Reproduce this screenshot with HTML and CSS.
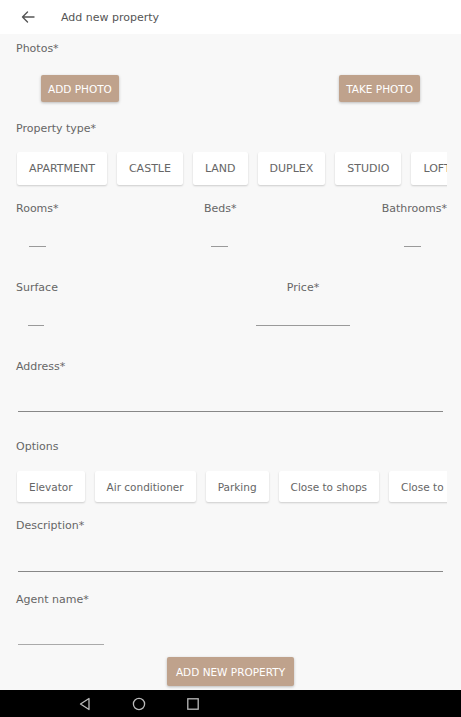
FILE: index.html
```html
<!DOCTYPE html>
<html lang="en">
<head>
<meta charset="utf-8">
<title>Add new property</title>
<link rel="stylesheet" href="styles.css">
</head>
<body>
<div class="screen">
  <header class="topbar">
    <svg class="back" width="14" height="12" viewBox="0 0 14 12"><path d="M13 6H1.5M6.5 1L1.5 6l5 5" fill="none" stroke="#555" stroke-width="1.4" stroke-linecap="round" stroke-linejoin="round"/></svg>
    <span class="title">Add new property</span>
  </header>
  <main class="form">
    <div class="label l-photos">Photos*</div>
    <div class="photo-row">
      <button class="btn">ADD PHOTO</button>
      <button class="btn">TAKE PHOTO</button>
    </div>

    <div class="label l-type">Property type*</div>
    <div class="chips chips-type">
      <span class="chip">APARTMENT</span>
      <span class="chip">CASTLE</span>
      <span class="chip">LAND</span>
      <span class="chip">DUPLEX</span>
      <span class="chip">STUDIO</span>
      <span class="chip">LOFT</span>
    </div>

    <div class="grid3">
      <div class="col">
        <div class="label">Rooms*</div>
        <div class="field short f-rooms"></div>
      </div>
      <div class="col">
        <div class="label">Beds*</div>
        <div class="field short f-beds"></div>
      </div>
      <div class="col">
        <div class="label">Bathrooms*</div>
        <div class="field short f-baths"></div>
      </div>
    </div>

    <div class="grid2">
      <div class="col">
        <div class="label">Surface</div>
        <div class="field short f-surface"></div>
      </div>
      <div class="col center">
        <div class="label">Price*</div>
        <div class="field f-price"></div>
      </div>
    </div>

    <div class="label l-address">Address*</div>
    <div class="field wide f-address"></div>

    <div class="label l-options">Options</div>
    <div class="chips chips-opt">
      <span class="chip">Elevator</span>
      <span class="chip">Air conditioner</span>
      <span class="chip">Parking</span>
      <span class="chip">Close to shops</span>
      <span class="chip">Close to schools</span>
    </div>

    <div class="label l-desc">Description*</div>
    <div class="field wide f-desc"></div>

    <div class="label l-agent">Agent name*</div>
    <div class="field f-agent"></div>

    <div class="submit-row">
      <button class="btn btn-submit">ADD NEW PROPERTY</button>
    </div>
  </main>
  <nav class="navbar">
    <svg width="14" height="14" viewBox="0 0 14 14"><path d="M11 1.5v11L2.5 7z" fill="none" stroke="#bbb" stroke-width="1.3" stroke-linejoin="round"/></svg>
    <svg width="14" height="14" viewBox="0 0 14 14"><circle cx="7" cy="7" r="5.6" fill="none" stroke="#bbb" stroke-width="1.3"/></svg>
    <svg width="14" height="14" viewBox="0 0 14 14"><rect x="1.8" y="1.8" width="10.4" height="10.4" fill="none" stroke="#bbb" stroke-width="1.3"/></svg>
  </nav>
</div>
</body>
</html>
```

FILE: styles.css
```css
* { box-sizing: border-box; }
html, body { margin: 0; padding: 0; }
body {
  background: #f8f8f8;
  font-family: "DejaVu Sans", "Liberation Sans", sans-serif;
  color: #666;
}
.screen {
  height: 717px;
  display: flex;
  flex-direction: column;
  overflow: hidden;
}
.topbar {
  height: 34px;
  background: #fff;
  display: flex;
  align-items: center;
  padding-left: 21px;
  flex: none;
}
.back { display: block; }
.title {
  margin-left: 26px;
  font-size: 11px;
  color: #555;
}
.form {
  padding: 0 14px 0 16px;
  display: flex;
  flex-direction: column;
}
.label {
  font-size: 11px;
  line-height: 16px;
  height: 14px;
  color: #666;
  white-space: nowrap;
}
.l-photos { margin-top: 7px; }
.photo-row {
  margin-top: 20px;
  display: flex;
  justify-content: space-between;
  padding: 0 27px 0 25px;
}
.btn {
  border: none;
  background: #bfa28c;
  color: #fff;
  font-family: inherit;
  font-size: 10.5px;
  height: 27px;
  padding: 0 7px;
  border-radius: 2px;
  box-shadow: 0 1px 3px rgba(0,0,0,0.25);
}
.l-type { margin-top: 19px; }
.chips {
  margin-top: 17px;
  display: flex;
  gap: 10px;
  overflow: hidden;
  padding: 0 0 3px 1px;
  margin-bottom: -3px;
}
.chip {
  flex: none;
  background: #fff;
  height: 33px;
  display: flex;
  align-items: center;
  padding: 0 12px;
  font-size: 11px;
  color: #666;
  border-radius: 2px;
  box-shadow: 0 1px 2px rgba(0,0,0,0.18);
  white-space: nowrap;
}
.chips-opt { margin-top: 18px; }
.chips-opt .chip { height: 31px; font-size: 10.5px; }
.grid3 {
  margin-top: 16px;
  display: grid;
  grid-template-columns: 188px 1fr auto;
}
.grid2 {
  margin-top: 33px;
  display: grid;
  grid-template-columns: 240px 94px;
}
.col { display: flex; flex-direction: column; }
.center { align-items: center; }
.field {
  height: 32px;
  border-bottom: 1px solid #9a9a9a;
}
.short { width: 17px; }
.f-rooms { margin-left: 13px; }
.f-beds { margin-left: 7px; }
.f-baths { align-self: flex-end; margin-right: 26px; }
.f-surface { margin-left: 12px; width: 16px; }
.f-price { width: 94px; }
.l-address { margin-top: 33px; }
.wide { margin: 0 4px 0 2px; border-bottom-color: #888; }
.f-address { height: 39px; }
.l-options { margin-top: 27px; }
.l-desc { margin-top: 16px; }
.f-desc { height: 40px; }
.l-agent { margin-top: 20px; }
.f-agent { height: 39px; width: 86px; margin-left: 2px; border-bottom-color: #aaa; }
.submit-row {
  margin-top: 12px;
  display: flex;
  justify-content: center;
  margin-left: -16px;
  margin-right: -14px;
}
.btn-submit { height: 29px; padding: 0 9px; }
.navbar {
  margin-top: auto;
  height: 27px;
  background: #000;
  flex: none;
  display: flex;
  align-items: center;
  gap: 40px;
  padding-left: 78px;
}
.navbar svg { display: block; }
```
